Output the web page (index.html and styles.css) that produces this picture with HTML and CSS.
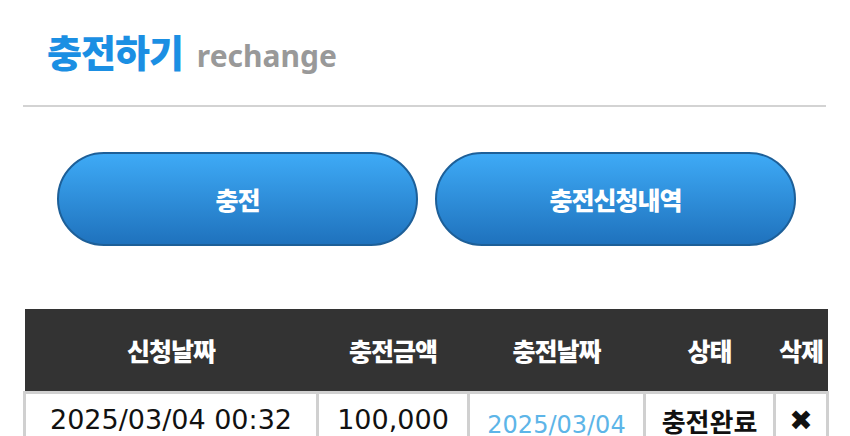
FILE: index.html
```html
<!DOCTYPE html>
<html lang="ko">
<head>
    <meta charset="UTF-8">
    <meta name="viewport" content="width=device-width, initial-scale=1.0">
    <title>충전하기</title>
    <link rel="stylesheet" href="styles.css">
</head>
<body>
    <div class="wrap">
        <div class="title">
            <h1>충전하기</h1>
            <span class="sub">rechange</span>
        </div>
        <div class="line"></div>

        <div class="tabs">
            <button class="tab">충전</button>
            <button class="tab">충전신청내역</button>
        </div>

        <table class="list">
            <thead>
                <tr>
                    <th class="c-req">신청날짜</th>
                    <th class="c-amt">충전금액</th>
                    <th class="c-date">충전날짜</th>
                    <th class="c-state">상태</th>
                    <th class="c-del">삭제</th>
                </tr>
            </thead>
            <tbody>
                <tr>
                    <td>2025/03/04 00:32</td>
                    <td>100,000</td>
                    <td class="done-date">2025/03/04 00:35</td>
                    <td class="state">충전완료</td>
                    <td class="del">&#10006;</td>
                </tr>
            </tbody>
        </table>
    </div>
</body>
</html>
```

FILE: styles.css
```css
body {
    margin: 0;
    background: #fff;
    font-family: "DejaVu Sans", "Noto Sans CJK KR", sans-serif;
}
.wrap {
    padding: 0 24px 0 23px;
}
.title {
    display: flex;
    align-items: baseline;
    padding: 26px 0 0 24px;
    height: 58px;
}
.title h1 {
    margin: 0;
    font-family: "Noto Sans CJK KR", sans-serif;
    font-size: 38px;
    font-weight: 900;
    letter-spacing: -1px;
    line-height: 50px;
    color: #1b8fe3;
}
.sub {
    margin-left: 14px;
    font-family: "Noto Sans", sans-serif;
    font-size: 30px;
    font-weight: 700;
    color: #999;
}
.line {
    height: 2px;
    margin-top: 21px;
    background: #d3d3d3;
}
.tabs {
    display: flex;
    gap: 17px;
    padding: 0 29px 0 34px;
    margin-top: 45px;
}
.tab {
    width: 361px;
    height: 94px;
    border: 2px solid #1d5f98;
    border-radius: 47px;
    background: linear-gradient(#3eaaf6, #1f72bd);
    color: #fff;
    font-family: "Noto Sans CJK KR", sans-serif;
    font-size: 25px;
    font-weight: 900;
    letter-spacing: -1px;
    cursor: pointer;
}
.list {
    width: 803px;
    margin-top: 63px;
    border-collapse: collapse;
    table-layout: fixed;
}
.list th {
    height: 82px;
    padding: 0;
    background: #333;
    color: #fff;
    font-family: "Noto Sans CJK KR", sans-serif;
    font-size: 25px;
    font-weight: 900;
    letter-spacing: -1px;
}
.c-req { width: 293px; }
.c-amt { width: 151px; }
.c-date { width: 176px; }
.c-state { width: 130px; }
.c-del { width: 53px; }
.list td {
    padding: 10px 0;
    border: 3px solid #d0d0d0;
    text-align: center;
    vertical-align: top;
    font-size: 27px;
    color: #111;
}
.list .done-date {
    padding-top: 11px;
    font-size: 24px;
    line-height: 40px;
    color: #5db5e8;
}
.list .state {
    padding-top: 8px;
    font-family: "Noto Sans CJK KR", sans-serif;
    font-size: 26px;
    font-weight: 700;
}
.list .del {
    font-size: 28px;
}
```
